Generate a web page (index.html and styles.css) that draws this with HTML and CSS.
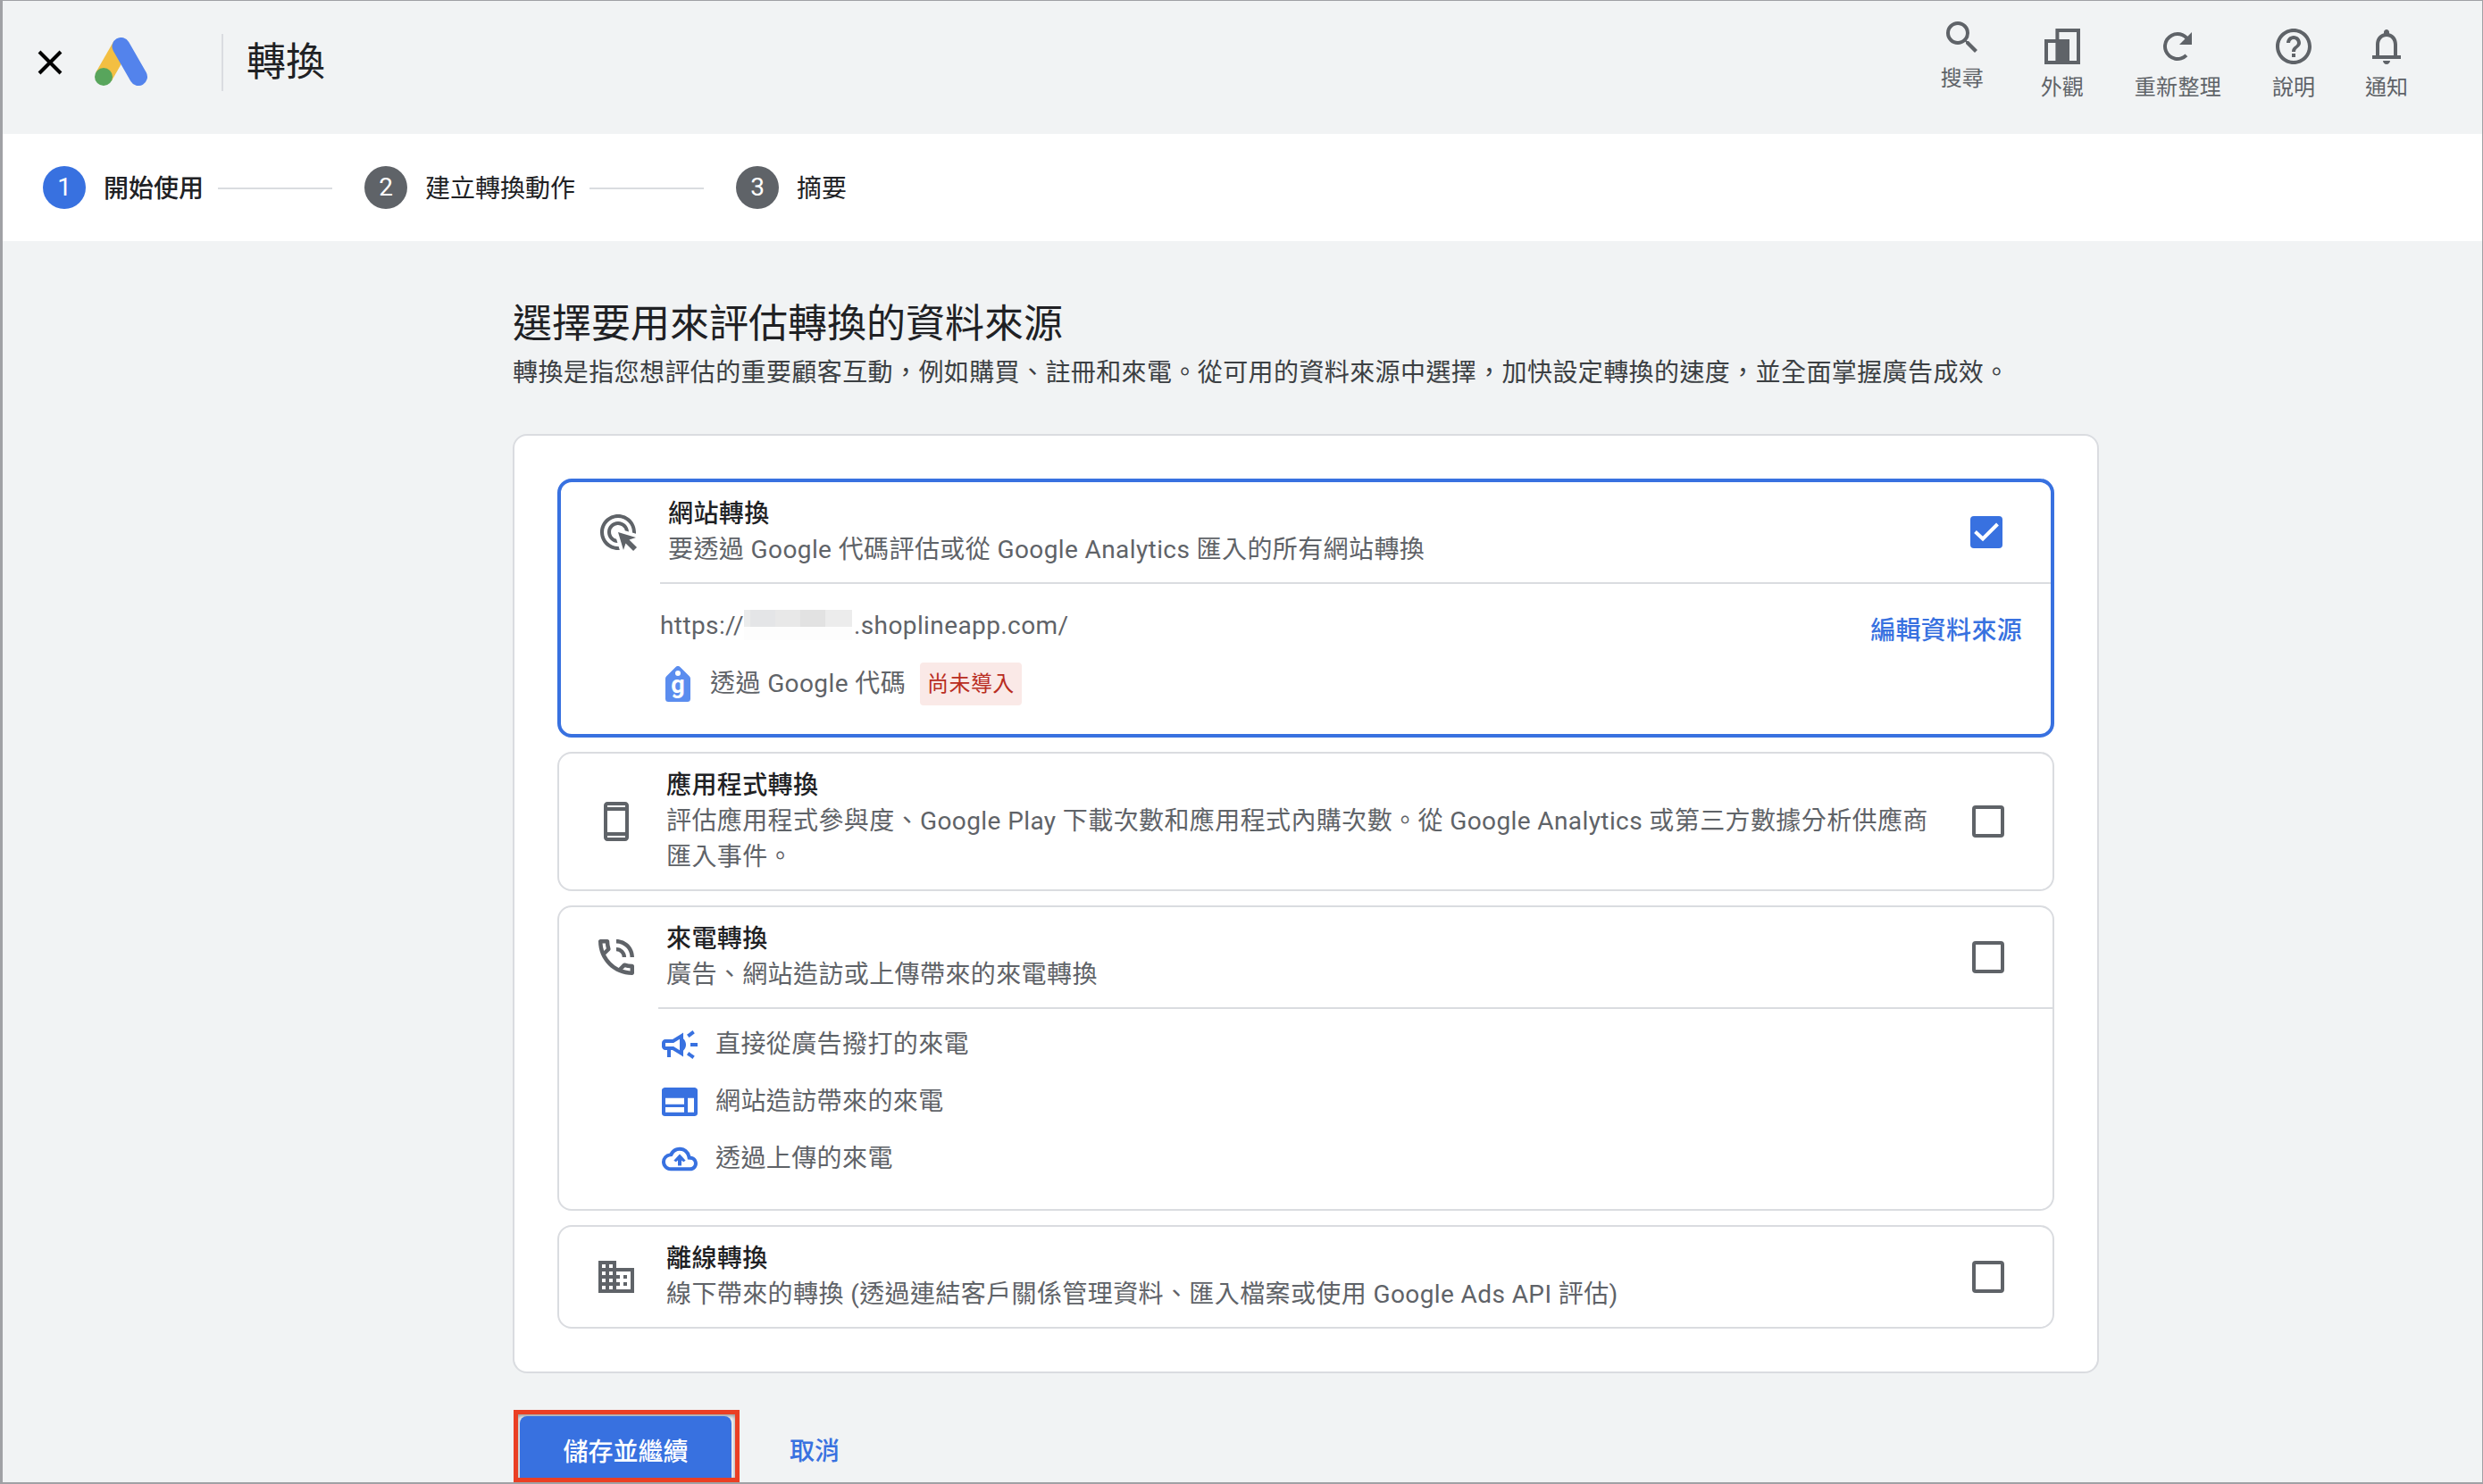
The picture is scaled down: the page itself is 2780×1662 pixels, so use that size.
FILE: index.html
```
<!DOCTYPE html>
<html lang="zh-Hant">
<head>
  <meta charset="UTF-8" />
  <meta name="viewport" content="width=device-width, initial-scale=1.0"/>
  <title>轉換</title>
  <link rel="stylesheet" href="styles.css">
</head>
<body>
  <header class="topbar">
    <svg class="close" viewBox="0 0 28 28"><path d="M2 2l24 24M26 2L2 26" stroke="#000" stroke-width="4" fill="none"/></svg>
    <svg class="logo" viewBox="0 0 60 54">
      <path d="M10 44L29.500 10" stroke="#f3bf42" stroke-width="20" />
      <path d="M29.500 10L49 44" stroke="#5383ec" stroke-width="20" stroke-linecap="round"/>
      <circle cx="10" cy="44" r="10" fill="#58a55c"/>
    </svg>
    <h1>轉換</h1>
    <nav class="tools">
      <a class="tool tool-search">
        <svg viewBox="0 0 24 24"><path d="M15.500 14h-.790l-.280-.270A6.470 6.470 0 0 0 16 9.500 6.500 6.500 0 1 0 9.500 16c1.610 0 3.090-.590 4.230-1.570l.270.280v.790l5 4.990L20.490 19l-4.990-5zm-6 0C7.010 14 5 11.990 5 9.500S7.010 5 9.500 5 14 7.010 14 9.500 11.990 14 9.500 14z"/></svg>
        <span>搜尋</span>
      </a>
      <a class="tool tool-look">
        <svg viewBox="0 0 24 24"><path d="M8.200 2H22v20H2V8h6.200zM10.200 8H16v12h4V4h-9.800zM4 10v10h4.200V10z" fill-rule="evenodd"/></svg>
        <span>外觀</span>
      </a>
      <a class="tool tool-refresh">
        <svg viewBox="0 0 24 24"><path d="M17.650 6.350A7.960 7.960 0 0 0 12 4a8 8 0 1 0 5.650 13.650l-1.420-1.420A6 6 0 1 1 12 6c1.660 0 3.140.690 4.220 1.780L13 11h7V4z"/></svg>
        <span>重新整理</span>
      </a>
      <a class="tool tool-help">
        <svg viewBox="0 0 24 24"><path d="M11 18h2v-2h-2v2zm1-16C6.480 2 2 6.480 2 12s4.480 10 10 10 10-4.480 10-10S17.520 2 12 2zm0 18c-4.410 0-8-3.590-8-8s3.590-8 8-8 8 3.590 8 8-3.590 8-8 8zm0-14c-2.210 0-4 1.790-4 4h2c0-1.100.900-2 2-2s2 .900 2 2c0 2-3 1.750-3 5h2c0-2.250 3-2.500 3-5 0-2.210-1.790-4-4-4z"/></svg>
        <span>說明</span>
      </a>
      <a class="tool">
        <svg viewBox="0 0 24 24"><path d="M18 17v-6c0-3.070-1.630-5.640-4.500-6.320V4c0-.830-.670-1.500-1.500-1.500s-1.500.670-1.500 1.500v.680C7.640 5.360 6 7.920 6 11v6H4v2h16v-2zm-2 0H8v-6c0-2.480 1.510-4.500 4-4.500s4 2.020 4 4.500zM12 22c1.100 0 2-.900 2-2h-4c0 1.100.900 2 2 2z"/></svg>
        <span>通知</span>
      </a>
    </nav>
  </header>

  <div class="stepper">
    <span class="step-num active">1</span><span class="step-label current">開始使用</span>
    <span class="step-line"></span>
    <span class="step-num">2</span><span class="step-label">建立轉換動作</span>
    <span class="step-line"></span>
    <span class="step-num">3</span><span class="step-label">摘要</span>
  </div>

  <main class="content">
    <h2>選擇要用來評估轉換的資料來源</h2>
    <p class="intro">轉換是指您想評估的重要顧客互動，例如購買、註冊和來電。從可用的資料來源中選擇，加快設定轉換的速度，並全面掌握廣告成效。</p>

    <div class="card">
      <section class="option selected">
        <div class="option-head">
          <svg class="icon" viewBox="0 0 24 24"><path d="M11.710 17.990A5.993 5.993 0 0 1 6 12c0-3.310 2.690-6 6-6 3.220 0 5.840 2.530 5.990 5.710l-2.100-.630a3.999 3.999 0 1 0-4.810 4.810l.630 2.100zM22 12c0 .300-.010.600-.040.900l-1.970-.590c.010-.100.010-.210.010-.310 0-4.420-3.580-8-8-8s-8 3.580-8 8 3.580 8 8 8c.100 0 .210 0 .310-.010l.590 1.970c-.300.030-.600.040-.900.040-5.520 0-10-4.480-10-10S6.480 2 12 2s10 4.480 10 10zm-3.770 4.260L22 15l-10-3 3 10 1.260-3.770 4.270 4.270 1.980-1.980-4.280-4.260z"/></svg>
          <div class="option-text">
            <h3>網站轉換</h3>
            <p>要透過 Google 代碼評估或從 Google Analytics 匯入的所有網站轉換</p>
          </div>
          <svg class="checkbox checked" viewBox="0 0 36 36"><rect width="36" height="36" rx="4"/><path d="M5.500 17.500L14 25.500L30.500 9"/></svg>
        </div>
        <div class="option-body site">
          <div class="site-info">
            <div class="url"><span>https://</span><span class="mask"><i></i><i></i><i></i><i></i><i></i></span><span>.shoplineapp.com/</span></div>
            <div class="tag-row">
              <svg class="tag-icon" viewBox="0 0 28 40">
                <path d="M14 0c1 0 2 .5 2.700 1.300L27 11.500c.7.800 1 1.500 1 2.500v22.500a3.500 3.500 0 0 1-3.500 3.500h-21A3.500 3.500 0 0 1 0 36.500V14c0-1 .300-1.700 1-2.500L11.300 1.300C12 .5 13 0 14 0z" fill="#5b8def"/>
                <circle cx="14" cy="8" r="3" fill="#fff"/>
                <text x="14" y="30" text-anchor="middle">g</text>
              </svg>
              <span class="tag-text">透過 Google 代碼</span>
              <span class="badge">尚未導入</span>
            </div>
          </div>
          <a class="edit">編輯資料來源</a>
        </div>
      </section>

      <section class="option">
        <div class="option-head">
          <svg class="icon" viewBox="0 0 24 24"><path d="M17 1.010L7 1c-1.100 0-1.990.900-1.990 2v18c0 1.100.890 2 1.990 2h10c1.100 0 2-.900 2-2V3c0-1.100-.900-1.990-2-1.990zM17 21H7v-1h10v1zm0-3H7V6h10v12zM7 4V3h10v1H7z"/></svg>
          <div class="option-text">
            <h3>應用程式轉換</h3>
            <p>評估應用程式參與度、Google Play 下載次數和應用程式內購次數。從 Google Analytics 或第三方數據分析供應商匯入事件。</p>
          </div>
          <svg class="checkbox" viewBox="0 0 36 36"><rect x="2" y="2" width="32" height="32" rx="2"/></svg>
        </div>
      </section>

      <section class="option">
        <div class="option-head">
          <svg class="icon" viewBox="0 0 24 24"><path transform="translate(-1.330 -1.330) scale(1.111)" d="M15 12h2c0-2.760-2.240-5-5-5v2c1.660 0 3 1.340 3 3zm4 0h2c0-4.970-4.030-9-9-9v2c3.870 0 7 3.130 7 7zm1 3.500c-1.250 0-2.450-.200-3.570-.570-.100-.030-.210-.050-.310-.050-.260 0-.510.100-.710.290l-2.200 2.200c-2.830-1.440-5.150-3.750-6.590-6.590l2.200-2.210c.280-.260.360-.650.250-1C8.700 6.450 8.500 5.250 8.500 4c0-.550-.450-1-1-1H4c-.550 0-1 .450-1 1 0 9.390 7.610 17 17 17 .550 0 1-.450 1-1v-3.500c0-.550-.450-1-1-1zM5.030 5h1.500c.070.880.220 1.750.460 2.590L5.790 8.800c-.410-1.210-.670-2.480-.760-3.800zM19 18.970c-1.320-.090-2.590-.350-3.800-.750l1.200-1.200c.850.240 1.720.390 2.600.450v1.500z"/></svg>
          <div class="option-text">
            <h3>來電轉換</h3>
            <p>廣告、網站造訪或上傳帶來的來電轉換</p>
          </div>
          <svg class="checkbox" viewBox="0 0 36 36"><rect x="2" y="2" width="32" height="32" rx="2"/></svg>
        </div>
        <ul class="option-body calls">
          <li>
            <svg viewBox="0 0 24 24"><path d="M18 11v2h4v-2h-4zm-2 6.610c.960.710 2.210 1.650 3.200 2.390.400-.530.800-1.070 1.200-1.600-.990-.740-2.240-1.680-3.200-2.400-.400.540-.800 1.080-1.200 1.610zM20.400 5.600c-.400-.530-.800-1.070-1.200-1.600-.990.740-2.240 1.680-3.200 2.400.400.530.800 1.070 1.200 1.600.960-.720 2.210-1.650 3.200-2.400z"/><path fill-rule="evenodd" d="M4 9c-1.100 0-2 .900-2 2v2c0 1.100.900 2 2 2h1v4h2v-4h1l6 3.700V5.300L8 9H4zm4.550 2L12 8.900v6.200L8.550 13H4v-2h4.550zM14 8.650v6.690c.920-.810 1.500-2.010 1.500-3.340s-.580-2.530-1.500-3.350z"/></svg>
            直接從廣告撥打的來電
          </li>
          <li>
            <svg viewBox="0 0 24 24"><path d="M20.200 2.500H3.800C2.800 2.500 2 3.300 2 4.300v15.400c0 1 .800 1.800 1.800 1.800h16.400c1 0 1.800-.800 1.800-1.800V4.300c0-1-.800-1.800-1.800-1.800zM14.500 19H4v-3.400h10.500V19zm0-5.400H4V9.500h10.500v4.100zM20 19h-3.500V9.500H20V19z" transform="translate(0 1.900) scale(1 .842)"/></svg>
            網站造訪帶來的來電
          </li>
          <li>
            <svg viewBox="0 0 24 24"><path d="M19.350 10.040A7.490 7.490 0 0 0 12 4C9.110 4 6.600 5.640 5.350 8.040A5.994 5.994 0 0 0 0 14c0 3.310 2.690 6 6 6h13c2.760 0 5-2.240 5-5 0-2.640-2.050-4.780-4.650-4.960zM18.600 17.600H6c-2 0-3.600-1.600-3.600-3.600 0-1.900 1.400-3.400 3.300-3.600l1.300-.150.600-1.100A5 5 0 0 1 12 6.400c2.400 0 4.500 1.700 5 4.100l.350 1.800 1.700.110A2.620 2.620 0 0 1 21.600 15c0 1.450-1.200 2.600-2.600 2.600zM8 13l1.500 1 1.300-1.100V16.500h2.400v-3.600L14.500 14 16 13l-4-4.300z" transform="translate(2 2) scale(.833)"/></svg>
            透過上傳的來電
          </li>
        </ul>
      </section>

      <section class="option">
        <div class="option-head">
          <svg class="icon" viewBox="0 0 24 24"><path d="M12 7V3H2v18h20V7H12zM6 19H4v-2h2v2zm0-4H4v-2h2v2zm0-4H4V9h2v2zm0-4H4V5h2v2zm4 12H8v-2h2v2zm0-4H8v-2h2v2zm0-4H8V9h2v2zm0-4H8V5h2v2zm10 12h-8v-2h2v-2h-2v-2h2v-2h-2V9h8v10zm-2-8h-2v2h2v-2zm0 4h-2v2h2v-2z"/></svg>
          <div class="option-text">
            <h3>離線轉換</h3>
            <p>線下帶來的轉換 (透過連結客戶關係管理資料、匯入檔案或使用 Google Ads API 評估)</p>
          </div>
          <svg class="checkbox" viewBox="0 0 36 36"><rect x="2" y="2" width="32" height="32" rx="2"/></svg>
        </div>
      </section>
    </div>

    <div class="actions">
      <div class="highlight"><button class="save">儲存並繼續</button></div>
      <a class="cancel">取消</a>
    </div>
  </main>
</body>
</html>
```

FILE: styles.css
```
* {
  box-sizing: border-box;
  margin: 0;
  padding: 0;
}
body {
  height: 1662px;
  overflow: hidden;
  display: flex;
  flex-direction: column;
  font-family: Roboto, 'Noto Sans CJK TC', sans-serif;
  font-size: 28px;
  line-height: 40px;
  color: #5f6368;
  background-color: #f1f3f4;
  border: 1px solid #a0a1a5;
  border-left-width: 3px;
  border-bottom-width: 2px;
}
svg {
  display: block;
  flex: none;
  fill: #5f6368;
}
h1, h2 {
  font-size: 44px;
  font-weight: 400;
  color: #202124;
}

/* top bar */
.topbar {
  display: flex;
  align-items: flex-start;
  height: 149px;
  flex: none;
  padding-left: 39px;
  padding-right: 83px;
}
.close {
  width: 28px;
  height: 28px;
  margin-top: 55px;
}
.logo {
  width: 60px;
  height: 54px;
  margin: 41px 82px 0 36px;
}
.topbar h1 {
  height: 64px;
  line-height: 64px;
  margin-top: 37px;
  padding-left: 26px;
  border-left: 2px solid #dadce0;
}
.tools {
  display: flex;
  margin-left: auto;
  padding-top: 27px;
  font-size: 24px;
  line-height: 28px;
}
.tool {
  display: flex;
  flex-direction: column;
  align-items: center;
  gap: 8px;
  margin-left: 56px;
}
.tool svg {
  width: 48px;
  height: 48px;
}
.tool-search {
  margin-top: -10px;
}
.tool-look {
  margin-left: 64px;
}
.tool-refresh {
  margin-left: 57px;
  letter-spacing: 0.3px;
}
.tool-help {
  margin-left: 57px;
}

/* steps */
.stepper {
  display: flex;
  align-items: center;
  height: 120px;
  flex: none;
  padding-left: 45px;
  background-color: #fff;
  color: #202124;
}
.step-num {
  width: 48px;
  height: 48px;
  line-height: 48px;
  border-radius: 50%;
  background-color: #5f6368;
  color: #fff;
  text-align: center;
}
.step-num.active {
  background-color: #3871e0;
}
.step-label {
  margin-left: 20px;
  padding-top: 3px;
}
.step-label.current {
  font-weight: 500;
}
.step-line {
  width: 128px;
  height: 2px;
  margin: 2px 36px 0 16px;
  background-color: #dadce0;
}

/* content */
.content {
  width: 1776px;
  margin-left: 571px;
  padding-top: 62px;
}
.content h2 {
  line-height: 62px;
}
.intro {
  margin-top: 4px;
  letter-spacing: 0.4px;
  color: #3c4043;
  white-space: nowrap;
}
.card {
  display: flex;
  flex-direction: column;
  gap: 16px;
  margin-top: 48px;
  padding: 48px;
  background-color: #fff;
  border: 2px solid #dadce0;
  border-radius: 16px;
}
.option {
  border: 2px solid #dadce0;
  border-radius: 16px;
  letter-spacing: 0.4px;
}
.option.selected {
  border: 4px solid #3871e0;
}
.option-head {
  display: flex;
  align-items: center;
  padding: 16px 54px 16px 40px;
}
.icon {
  width: 48px;
  height: 48px;
  margin-right: 32px;
}
.option-text {
  flex: 1;
}
.option-text h3 {
  font-size: 28px;
  font-weight: 500;
  color: #202124;
}
.option-text p {
  width: 1420px;
}
.checkbox {
  width: 36px;
  height: 36px;
}
.checkbox rect {
  fill: none;
  stroke: #5f6368;
  stroke-width: 4;
}
.checkbox.checked rect {
  fill: #3871e0;
  stroke: none;
}
.checkbox.checked path {
  fill: none;
  stroke: #fff;
  stroke-width: 4;
}
.option-body {
  margin-left: 111px;
  border-top: 2px solid #dadce0;
}

/* website option */
.site {
  display: flex;
  justify-content: space-between;
  height: 170px;
  padding: 27px 32px 0 0;
}
.url {
  display: flex;
}
.mask {
  display: flex;
  align-items: flex-start;
  width: 121px;
  height: 34px;
  margin: 2px 2px 0 0;
  background-color: #fdfdfd;
}
.mask i {
  width: 28px;
  height: 19px;
  background-color: #e4e5e7;
}
.mask i:first-child {
  width: 7px;
  background-color: #ebecec;
}
.mask i:nth-child(3) {
  background-color: #e8e8e8;
}
.mask i:nth-child(4) {
  background-color: #e2e2e2;
}
.mask i:last-child {
  width: 30px;
  background-color: #ececec;
}
.tag-row {
  display: flex;
  align-items: center;
  height: 48px;
  margin-top: 21px;
}
.tag-icon {
  width: 28px;
  height: 40px;
  margin: 0 22px 0 6px;
}
.tag-icon text {
  font-family: Roboto, sans-serif;
  font-size: 27px;
  font-weight: 700;
  letter-spacing: 0;
  fill: #fff;
}
.badge {
  height: 48px;
  line-height: 48px;
  margin-left: 16px;
  padding: 0 8px;
  font-size: 24px;
  border-radius: 4px;
  color: #b92d22;
  background-color: #fae9e7;
}
.edit {
  margin-top: 6px;
  font-weight: 500;
  letter-spacing: 0.3px;
  color: #3871e0;
}

/* calls option */
.calls {
  height: 226px;
  padding-top: 16px;
  list-style: none;
}
.calls li {
  display: flex;
  align-items: center;
  gap: 16px;
  height: 48px;
  margin-bottom: 16px;
}
.calls svg {
  width: 48px;
  height: 48px;
  fill: #3871e0;
}

/* buttons */
.actions {
  display: flex;
  align-items: flex-start;
  margin-top: 41px;
  font-weight: 500;
}
.highlight {
  width: 253px;
  height: 81px;
  margin-left: 1px;
  padding: 2px;
  overflow: hidden;
  border: 5px solid #ea3f24;
  box-shadow: inset 0 2px 4px rgba(0, 0, 0, 0.4);
}
.save {
  display: block;
  width: 237px;
  height: 80px;
  padding-top: 2px;
  font: inherit;
  color: #fff;
  border: none;
  border-radius: 8px;
  background-color: #3871e0;
}
.cancel {
  margin: 27px 0 0 56px;
  color: #3871e0;
}
```
